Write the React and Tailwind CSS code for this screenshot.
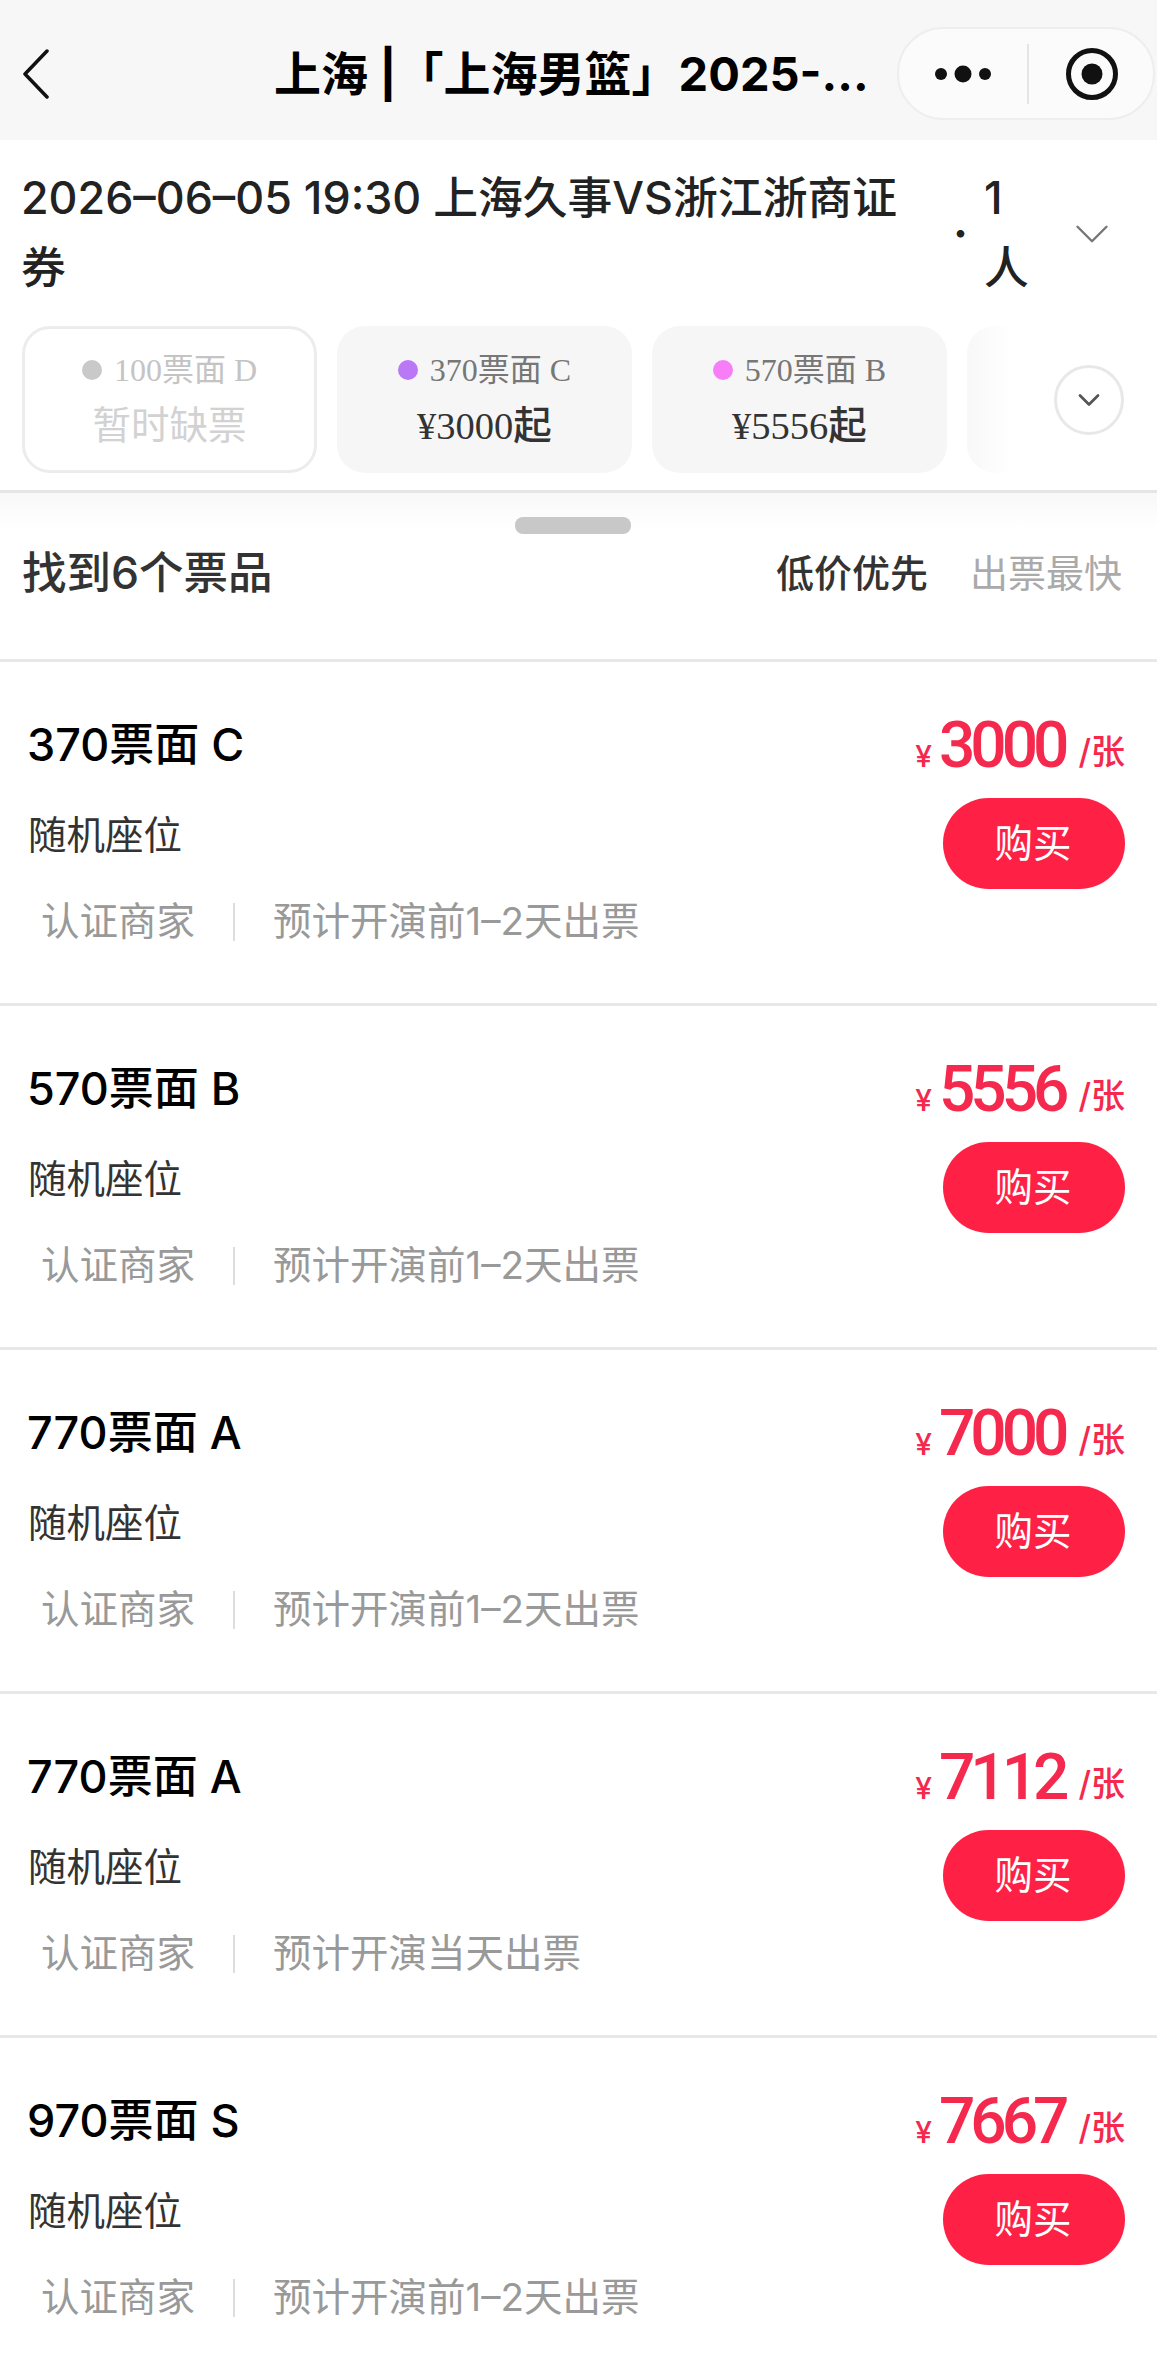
import { ChevronDown } from 'lucide-react';

const SANS = 'font-["Inter","Noto_Sans_CJK_SC",sans-serif]';

const tickets = [
  { name: '370票面 C', price: '3000', note: '预计开演前1–2天出票' },
  { name: '570票面 B', price: '5556', note: '预计开演前1–2天出票' },
  { name: '770票面 A', price: '7000', note: '预计开演前1–2天出票' },
  { name: '770票面 A', price: '7112', note: '预计开演当天出票' },
  { name: '970票面 S', price: '7667', note: '预计开演前1–2天出票' },
];

function NavBar() {
  return (
    <div className="flex h-[140px] items-center bg-[#f7f7f7] pt-[7px] pl-[22px] pr-[2px]">
      <svg width="28" height="50" viewBox="0 0 28 50" fill="none" className="shrink-0">
        <path d="M25 2 L3 25 L25 48" stroke="#111" strokeWidth="3.5" strokeLinecap="round" strokeLinejoin="round" />
      </svg>
      <div className="ml-[224px] w-[601px] shrink-0 whitespace-nowrap text-[47px] leading-[60px] font-bold text-black">
        上海 |「上海男篮」2025-...
      </div>
      <div className="ml-[22px] flex h-[93px] w-[258px] shrink-0 items-center rounded-[46px] border-2 border-[#eeeeee] bg-[#fbfbfb]">
        <svg width="58" height="20" viewBox="0 0 58 20" className="ml-[35px] shrink-0">
          <circle cx="7" cy="10" r="6" fill="#111" />
          <circle cx="29" cy="10" r="8.5" fill="#111" />
          <circle cx="51" cy="10" r="6" fill="#111" />
        </svg>
        <div className="ml-[35px] h-[60px] w-[2px] shrink-0 bg-[#e5e5e5]" />
        <svg width="54" height="54" viewBox="0 0 54 54" className="ml-[36px] shrink-0">
          <circle cx="27" cy="27" r="23.5" fill="none" stroke="#111" strokeWidth="5" />
          <circle cx="27" cy="27" r="10.5" fill="#111" />
        </svg>
      </div>
    </div>
  );
}

function DateRow() {
  return (
    <div className="flex pl-[21px] pt-[23px] pb-[23px] text-[44.8px] leading-[70px] font-medium text-[#222]">
      <div className="w-[885px] shrink-0">2026–06–05 19:30 上海久事VS浙江浙商证券</div>
      <div className="ml-[47px] flex w-[31px] shrink-0 items-center font-bold text-[#222]">·</div>
      <div className="w-[50px] shrink-0 text-[#222]">1 人</div>
      <ChevronDown className="mt-[42px] ml-[29px] shrink-0 text-[#777]" size={58} strokeWidth={1} />
    </div>
  );
}

function Chip({ dot, name, price, disabled }) {
  return (
    <div
      className={`flex h-[147px] w-[295px] shrink-0 flex-col items-center rounded-[28px] font-["Liberation_Serif","Noto_Sans_CJK_SC",serif] ${
        disabled ? 'border-[3px] border-[#ececec] bg-white pt-[23px]' : 'bg-[#f6f6f6] pt-[26px]'
      }`}
    >
      <div className={`flex h-[36px] items-center gap-[12px] text-[32px] leading-[36px] ${disabled ? 'text-[#c4c4c4]' : 'text-[#777]'}`}>
        <span className={`h-[20px] w-[20px] rounded-full ${dot}`} />
        {name}
      </div>
      <div className={`mt-[15px] text-[38.5px] leading-[46px] ${disabled ? 'text-[#d2d2d2]' : 'font-medium text-[#333]'}`}>{price}</div>
    </div>
  );
}

function ChipRow() {
  return (
    <div className="flex items-center gap-[20px] pl-[22px]">
      <Chip dot="bg-[#c9c9c9]" name="100票面 D" price="暂时缺票" disabled />
      <Chip dot="bg-[#bb78f5]" name="370票面 C" price="¥3000起" />
      <Chip dot="bg-[#f77ef7]" name="570票面 B" price="¥5556起" />
      <div className="h-[147px] w-[44px] shrink-0 rounded-l-[28px] bg-gradient-to-r from-[#f8f8f8] to-white" />
      <div className="ml-[23px] flex h-[70px] w-[70px] shrink-0 items-center justify-center rounded-full border-[3px] border-[#e8e8e8] bg-white">
        <ChevronDown size={36} strokeWidth={1.8} className="text-[#555]" />
      </div>
    </div>
  );
}

function TicketRow({ name, price, note }) {
  return (
    <div className="flex h-[344px] justify-between border-b-[3px] border-[#e8e8e8] pl-[27px] pr-[32px]">
      <div className="pt-[53px]">
        <div className="text-[45px] leading-[60px] font-medium text-black">{name}</div>
        <div className="mt-[35px] ml-[1px] text-[38.5px] leading-[50px] text-[#333]">随机座位</div>
        <div className="mt-[37px] flex h-[50px] items-center pl-[14px] text-[38.5px] text-[#999]">
          <span>认证商家</span>
          <span className="mx-[38px] h-[38px] w-[2px] bg-[#ddd]" />
          <span>{note}</span>
        </div>
      </div>
      <div className="flex flex-col items-end pt-[49px]">
        <div className="flex h-[70px] items-baseline text-[#f5294d]">
          <span className="mr-[7px] text-[30px] font-medium">¥</span>
          <span className='font-["Roboto",sans-serif] text-[64px] leading-[70px] font-medium tracking-[-5px]'>{price}</span>
          <span className="ml-[14px] -translate-y-[3px] text-[34px] font-medium">/张</span>
        </div>
        <button className="mt-[17px] h-[91px] w-[182px] rounded-full bg-[#ff2145] pr-[2px] text-[38.5px] text-white">购买</button>
      </div>
    </div>
  );
}

export default function App() {
  return (
    <div className={`h-[2359px] overflow-hidden bg-white ${SANS}`}>
      <NavBar />
      <DateRow />
      <ChipRow />
      <div className="mt-[17px] h-[3px] bg-[#e5e5e5]" />

      {/* list header */}
      <div className="h-[169px] border-b-[3px] border-[#e8e8e8] bg-gradient-to-b from-[#f8f8f8] to-white to-[22%] pt-[24px]">
        <div className="ml-[515px] h-[17px] w-[116px] rounded-[8px] bg-[#c8c8c8]" />
        <div className="flex h-[78px] items-center justify-between pl-[22px] pr-[35px]">
          <div className="text-[44.5px] font-medium text-[#333]">找到6个票品</div>
          <div className="flex gap-[42px] text-[38px]">
            <span className="font-medium text-[#333]">低价优先</span>
            <span className="text-[#aaa]">出票最快</span>
          </div>
        </div>
      </div>

      {tickets.map((t, i) => (
        <TicketRow key={i} {...t} />
      ))}
    </div>
  );
}
